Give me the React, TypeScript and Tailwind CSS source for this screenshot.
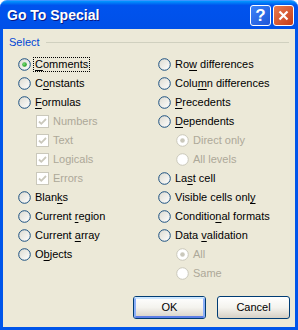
import React from 'react';

const font = { fontFamily: '"Liberation Sans", Arial, sans-serif' };

function Radio({ checked = false, disabled = false }: { checked?: boolean; disabled?: boolean }) {
  const id = disabled ? 'rg-d' : 'rg-e';
  return (
    <svg width="13" height="13" viewBox="0 0 13 13" className="shrink-0">
      <defs>
        <linearGradient id={id} x1="0" y1="0" x2="1" y2="1">
          <stop offset="0" stopColor={disabled ? '#ffffff' : '#dcdad0'} />
          <stop offset="1" stopColor="#ffffff" />
        </linearGradient>
        <radialGradient id="dot" cx="0.4" cy="0.4" r="0.6">
          <stop offset="0" stopColor="#7ee07a" />
          <stop offset="1" stopColor="#1d9a1d" />
        </radialGradient>
      </defs>
      <circle cx="6.5" cy="6.5" r="5.8" fill={`url(#${id})`} stroke={disabled ? '#cac8bb' : '#1c5180'} strokeWidth="1" />
      {checked && <circle cx="6.5" cy="6.5" r="2.3" fill={disabled ? '#cac8bb' : 'url(#dot)'} />}
    </svg>
  );
}

function Check() {
  return (
    <svg width="13" height="13" viewBox="0 0 13 13" className="shrink-0">
      <rect x="0.5" y="0.5" width="12" height="12" fill="#ffffff" stroke="#cac8bb" />
      <path d="M3 6.5 L5.3 8.8 L10 4" fill="none" stroke="#cac8bb" strokeWidth="1.8" />
    </svg>
  );
}

function Label({ text, u, disabled = false }: { text: string; u?: number; disabled?: boolean }) {
  if (u === undefined) return <span className={disabled ? 'text-[#aca899]' : 'text-black'}>{text}</span>;
  return (
    <span className={disabled ? 'text-[#aca899]' : 'text-black'}>
      {text.slice(0, u)}
      <span className="underline underline-offset-2">{text[u]}</span>
      {text.slice(u + 1)}
    </span>
  );
}

type Item = { t: string; u?: number; kind: 'radio' | 'check' | 'subradio'; checked?: boolean; focus?: boolean };

const left: Item[] = [
  { t: 'Comments', u: 0, kind: 'radio', checked: true, focus: true },
  { t: 'Constants', u: 1, kind: 'radio' },
  { t: 'Formulas', u: 0, kind: 'radio' },
  { t: 'Numbers', kind: 'check' },
  { t: 'Text', kind: 'check' },
  { t: 'Logicals', kind: 'check' },
  { t: 'Errors', kind: 'check' },
  { t: 'Blanks', u: 4, kind: 'radio' },
  { t: 'Current region', u: 8, kind: 'radio' },
  { t: 'Current array', u: 8, kind: 'radio' },
  { t: 'Objects', u: 1, kind: 'radio' },
];

const right: Item[] = [
  { t: 'Row differences', u: 2, kind: 'radio' },
  { t: 'Column differences', u: 4, kind: 'radio' },
  { t: 'Precedents', u: 0, kind: 'radio' },
  { t: 'Dependents', u: 0, kind: 'radio' },
  { t: 'Direct only', kind: 'subradio', checked: true },
  { t: 'All levels', kind: 'subradio' },
  { t: 'Last cell', u: 2, kind: 'radio' },
  { t: 'Visible cells only', u: 17, kind: 'radio' },
  { t: 'Conditional formats', u: 8, kind: 'radio' },
  { t: 'Data validation', u: 5, kind: 'radio' },
  { t: 'All', kind: 'subradio', checked: true },
  { t: 'Same', kind: 'subradio' },
];

function Row({ it }: { it: Item }) {
  const sub = it.kind !== 'radio';
  return (
    <div className={`flex h-[19px] items-center gap-[3px] ${sub ? 'pl-[18px]' : ''}`}>
      {it.kind === 'check' ? <Check /> : <Radio checked={it.checked} disabled={sub} />}
      <span className={`px-[1px] leading-[13px] ${it.focus ? 'outline-1 outline-dotted outline-black' : 'outline-none'}`}>
        <Label text={it.t} u={it.u} disabled={sub} />
      </span>
    </div>
  );
}

function XPButton({ children, def = false }: { children: React.ReactNode; def?: boolean }) {
  return (
    <div className="w-[73px] h-[23px] rounded-[3px] border border-[#003c74] bg-gradient-to-b from-[#ffffff] via-[#f4f3ee] to-[#d6d0c5] flex items-center justify-center text-black text-[11px]">
      <div
        className={`w-full h-full rounded-[2px] flex items-center justify-center ${
          def ? 'border-2 border-[#8cb0f8] border-b-[#5c7ee6] border-t-[#cee7ff]' : 'border-2 border-transparent'
        }`}
      >
        {children}
      </div>
    </div>
  );
}

export default function App() {
  return (
    <div className="w-[298px] h-[330px] bg-white select-none text-[11px]" style={font}>
      <div className="w-[298px] h-[330px] flex flex-col">
        {/* title bar */}
        <div className="h-[29px] rounded-t-[7px] bg-gradient-to-b from-[#0997ff] via-[#0053ee] via-[15%] to-[#0050e8] border-t border-t-[#3d95ff] flex items-center pl-[7px] pr-[4px]">
          <span className="text-white font-bold text-[14px] flex-1 [text-shadow:1px_1px_0_#0a1883]">Go To Special</span>
          <div className="flex gap-[2px]">
            <div className="w-[21px] h-[21px] rounded-[3px] border border-white bg-gradient-to-br from-[#3c82f8] to-[#1f55d8] flex items-center justify-center text-white font-bold text-[17px] leading-none">
              ?
            </div>
            <div className="w-[21px] h-[21px] rounded-[3px] border border-white bg-gradient-to-br from-[#e97a4f] to-[#c63b16] flex items-center justify-center">
              <svg width="11" height="11" viewBox="0 0 11 11">
                <path d="M1.5 1.5 L9.5 9.5 M9.5 1.5 L1.5 9.5" stroke="#ffffff" strokeWidth="2.2" />
              </svg>
            </div>
          </div>
        </div>
        {/* body */}
        <div className="flex-1 bg-[#0055ea] px-[3px] pb-[3px] flex">
          <div className="flex-1 bg-[#ece9d8] flex flex-col">
            <div className="flex items-center pl-[6px] pr-[6px] mt-[7px] h-[13px]">
              <span className="text-[#0046d5] pr-[6px]">Select</span>
              <div className="flex-1 border-t border-[#d0d0bf]" />
            </div>
            <div className="flex mt-[6px] pl-[15px]">
              <div className="w-[140px] flex flex-col">
                {left.map((it) => (
                  <Row key={it.t} it={it} />
                ))}
              </div>
              <div className="flex-1 flex flex-col">
                {right.map((it) => (
                  <Row key={it.t + it.kind} it={it} />
                ))}
              </div>
            </div>
            <div className="flex justify-end gap-[11px] pr-[5px] mt-[13px]">
              <XPButton def>OK</XPButton>
              <XPButton>Cancel</XPButton>
            </div>
          </div>
        </div>
      </div>
    </div>
  );
}
